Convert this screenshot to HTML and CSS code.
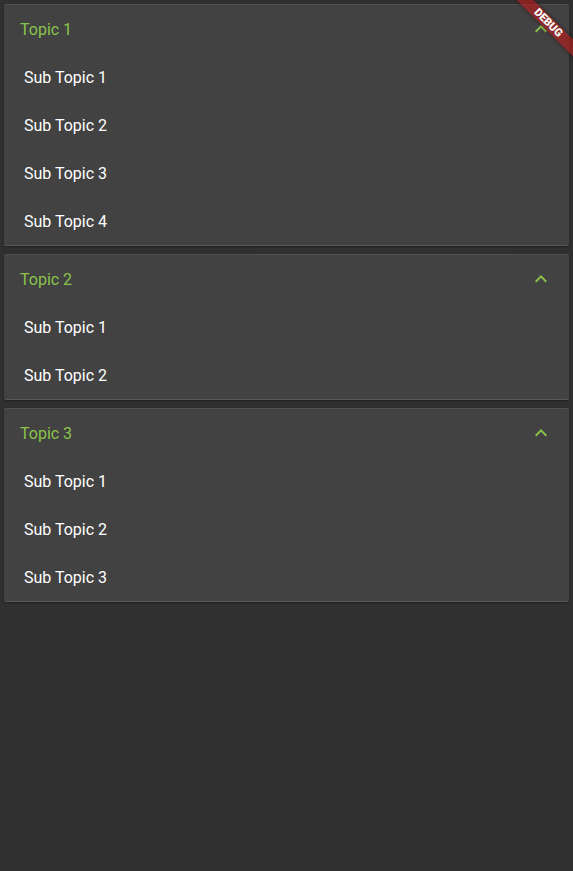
FILE: index.html
```html
<!DOCTYPE html>
<html>
<head>
<meta charset="utf-8">
<link rel="stylesheet" href="styles.css">
</head>
<body>
<div class="list">
  <div class="card">
    <div class="header"><span class="title">Topic 1</span>
      <svg class="chev" viewBox="0 0 24 24" width="24" height="24"><path d="M12 8l-6 6 1.41 1.41L12 10.83l4.59 4.58L18 14z"/></svg></div>
    <div class="item">Sub Topic 1</div>
    <div class="item">Sub Topic 2</div>
    <div class="item">Sub Topic 3</div>
    <div class="item">Sub Topic 4</div>
  </div>
  <div class="card">
    <div class="header"><span class="title">Topic 2</span>
      <svg class="chev" viewBox="0 0 24 24" width="24" height="24"><path d="M12 8l-6 6 1.41 1.41L12 10.83l4.59 4.58L18 14z"/></svg></div>
    <div class="item">Sub Topic 1</div>
    <div class="item">Sub Topic 2</div>
  </div>
  <div class="card">
    <div class="header"><span class="title">Topic 3</span>
      <svg class="chev" viewBox="0 0 24 24" width="24" height="24"><path d="M12 8l-6 6 1.41 1.41L12 10.83l4.59 4.58L18 14z"/></svg></div>
    <div class="item">Sub Topic 1</div>
    <div class="item">Sub Topic 2</div>
    <div class="item">Sub Topic 3</div>
  </div>
</div>
<div class="banner">DEBUG</div>
</body>
</html>
```
FILE: styles.css
```css
html, body {
  margin: 0;
  padding: 0;
  background: #303030;
  height: 100%;
  overflow: hidden;
}
body {
  font-family: Roboto, "Noto Sans", sans-serif;
  position: relative;
}
.list {
  display: flex;
  flex-direction: column;
  padding: 4px;
  gap: 8px;
}
.card {
  background: #424242;
  border-radius: 2px;
  border-top: 1px solid rgba(255,255,255,0.08);
  border-bottom: 1px solid rgba(255,255,255,0.12);
  box-shadow: 0 1px 2px rgba(0,0,0,0.35);
  display: flex;
  flex-direction: column;
}
.header {
  height: 48px;
  display: flex;
  align-items: center;
  justify-content: space-between;
  padding: 0 16px;
}
.title {
  color: #8bc34a;
  font-size: 16px;
}
.chev {
  fill: #8bc34a;
  display: block;
}
.item {
  height: 48px;
  display: flex;
  align-items: center;
  padding-left: 20px;
  color: #ffffff;
  font-size: 16px;
  font-weight: 400;
}
.banner {
  position: absolute;
  left: 488px;
  top: 17px;
  width: 120px;
  height: 12px;
  line-height: 12px;
  transform: rotate(45deg);
  background: rgba(183, 28, 28, 0.63);
  color: #fff;
  font-size: 11px;
  font-weight: 900;
  text-align: center;
  box-shadow: 0 0 4px rgba(0,0,0,0.5);
}
```
